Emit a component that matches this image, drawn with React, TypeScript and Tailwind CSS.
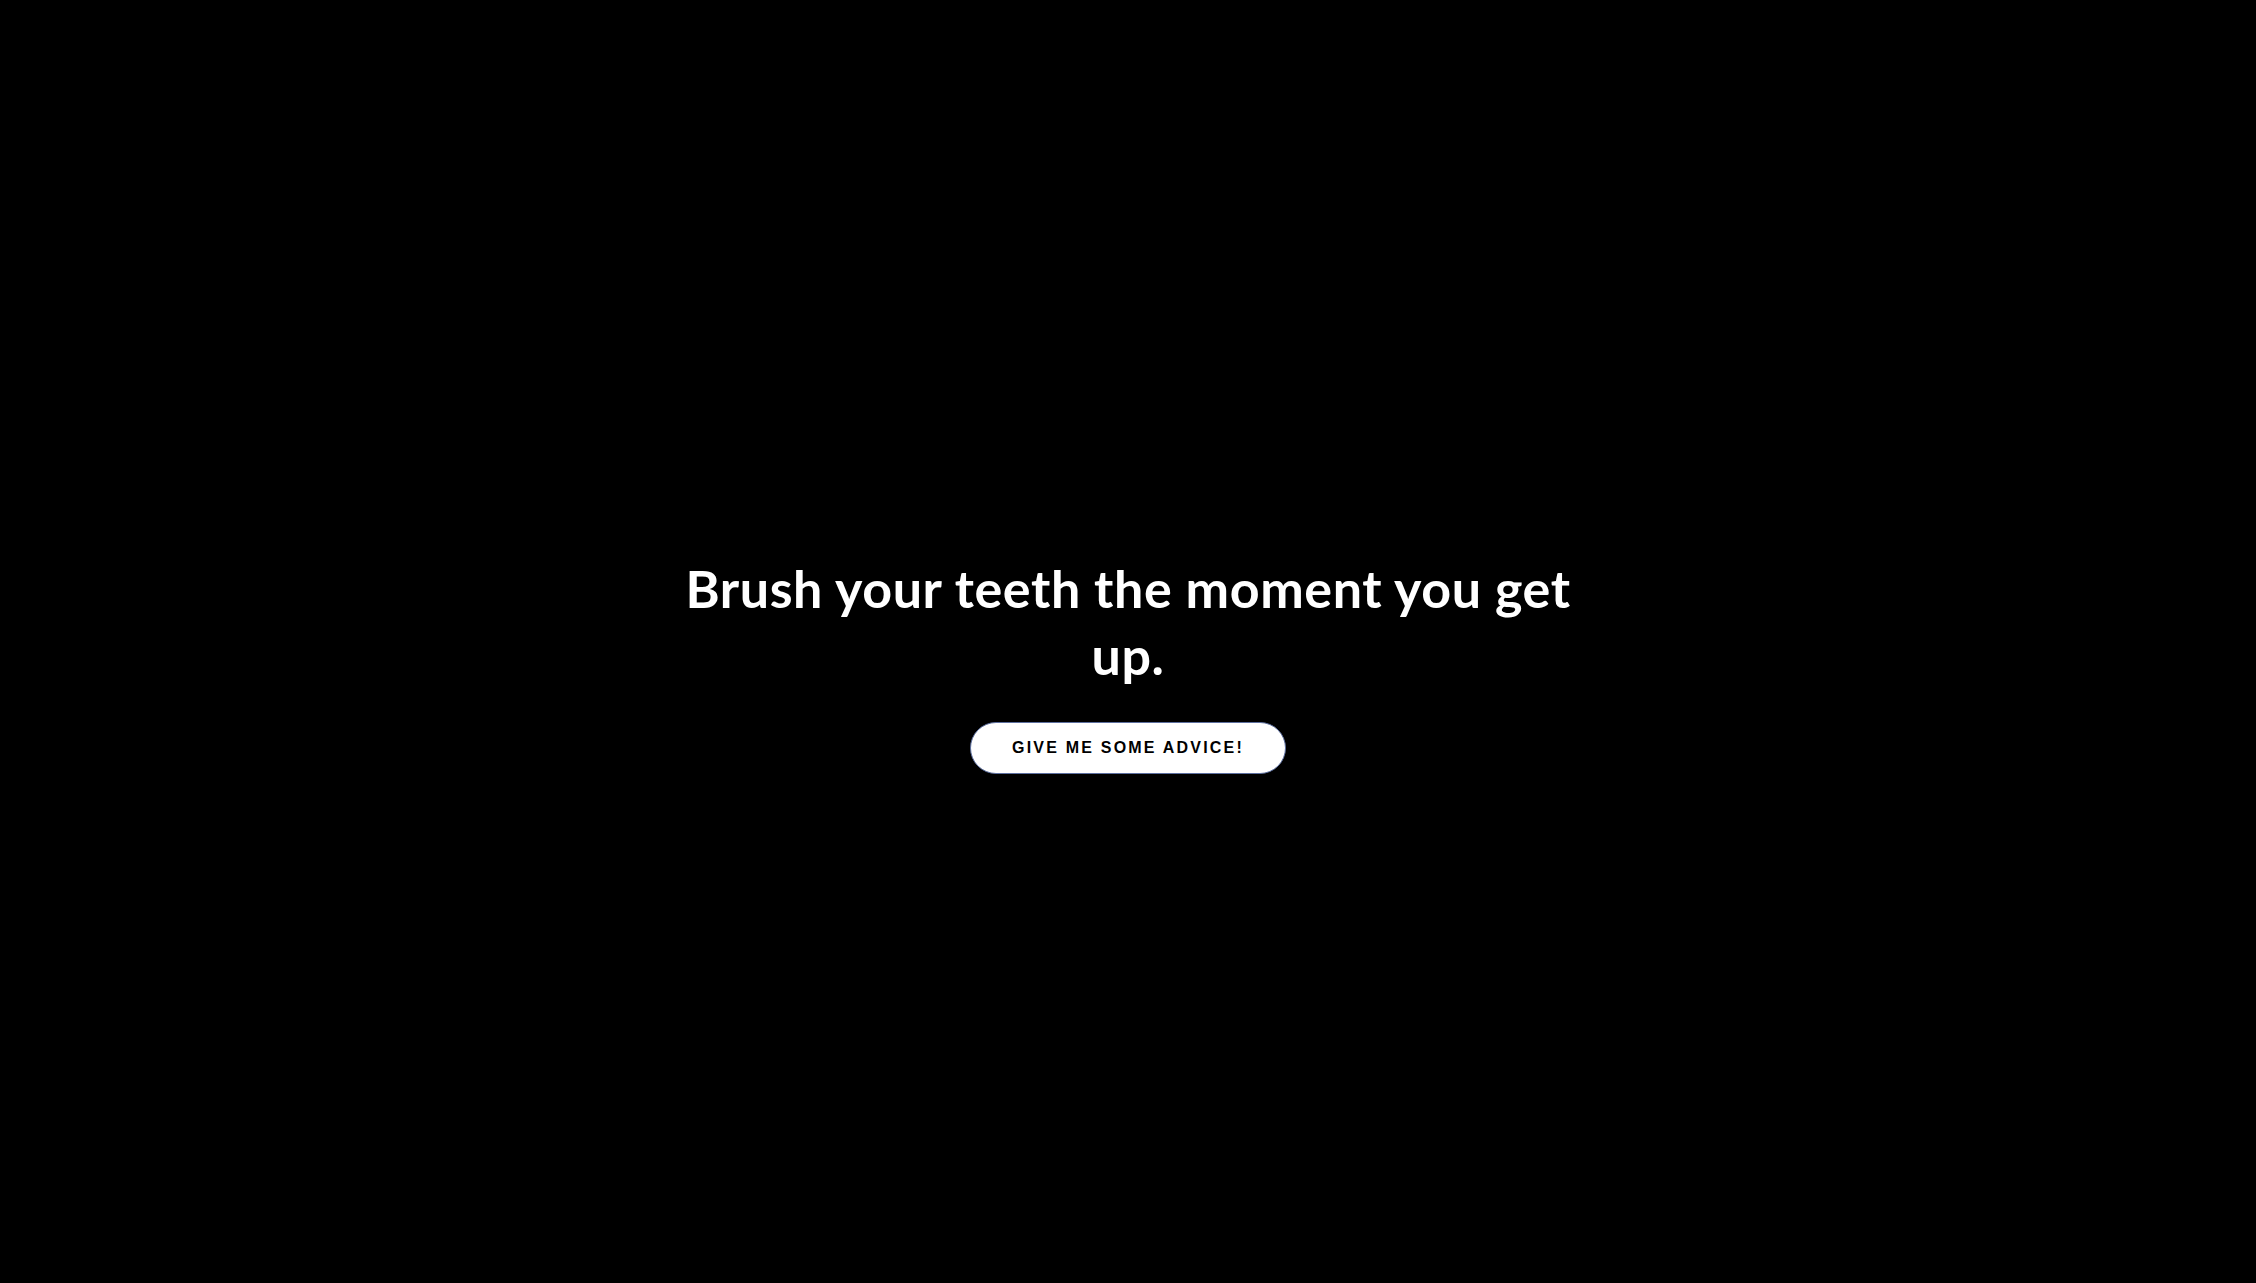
import { useState } from "react";

const tips = [
  "Brush your teeth the moment you get up.",
  "Never trust a man with a beard.",
  "Don't eat yellow snow.",
];

export default function App() {
  const [idx, setIdx] = useState(0);

  return (
    <main className="min-h-screen w-full bg-black flex flex-col items-center justify-center pt-[45px]">
      <h1 className="max-w-[940px] text-center text-white text-[52px] leading-[67px] tracking-[0.6px] font-bold font-['Comic_Sans_MS','Lato',cursive]">
        {tips[idx]}
      </h1>
      <button
        onClick={() => setIdx((idx + 1) % tips.length)}
        className="mt-[33px] h-[52px] px-[41px] rounded-full bg-white border border-[#5d6f9f] text-black text-[16px] font-bold uppercase tracking-[2.2px] font-['Liberation_Sans',Arial,sans-serif]"
      >
        Give me some advice!
      </button>
    </main>
  );
}
